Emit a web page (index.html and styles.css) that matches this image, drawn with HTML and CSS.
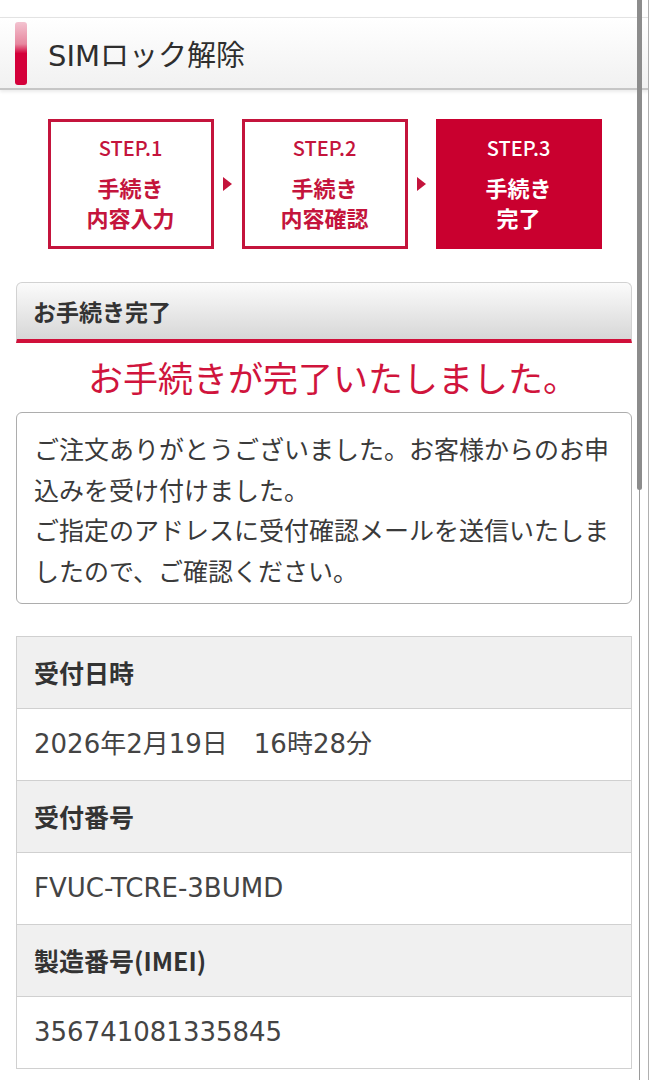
FILE: index.html
```html
<!DOCTYPE html>
<html lang="ja">
<head>
<meta charset="UTF-8" />
<meta name="viewport" content="width=device-width, initial-scale=1" />
<title>SIMロック解除</title>
<link rel="stylesheet" href="styles.css">
</head>
<body>

<div class="page">
  <div class="pagehead">
    <span class="accent"></span>
    <h1>SIMロック解除</h1>
  </div>

  <div class="steps">
    <div class="step">
      <div class="stepno">STEP.1</div>
      <div class="steplabel">手続き<br>内容入力</div>
    </div>
    <div class="arrow"><span></span></div>
    <div class="step">
      <div class="stepno">STEP.2</div>
      <div class="steplabel">手続き<br>内容確認</div>
    </div>
    <div class="arrow"><span></span></div>
    <div class="step current">
      <div class="stepno">STEP.3</div>
      <div class="steplabel">手続き<br>完了</div>
    </div>
  </div>

  <div class="content">
    <h2 class="secttitle">お手続き完了</h2>
    <p class="done">お手続きが完了いたしました。</p>

    <div class="notice">
      ご注文ありがとうございました。お客様からのお申<br>込みを受け付けました。<br>
      ご指定のアドレスに受付確認メールを送信いたしま<br>したので、ご確認ください。
    </div>

    <dl class="info">
      <dt>受付日時</dt>
      <dd>2026年2月19日　16時28分</dd>
      <dt>受付番号</dt>
      <dd>FVUC-TCRE-3BUMD</dd>
      <dt>製造番号(IMEI)</dt>
      <dd>356741081335845</dd>
    </dl>
  </div>
</div>

<!-- mobile overlay scrollbar -->
<div class="scrollrail"><div class="thumb"></div></div>

</body>
</html>
```

FILE: styles.css
```css
body {
  margin: 0;
  background: #fff;
  color: #333;
  font-family: "Noto Sans CJK JP", "Noto Sans", sans-serif;
}
.page { width: 649px; padding-top: 17px; }

.pagehead {
  height: 70px; display: flex; align-items: center; padding-left: 15px;
  border-top: 1px solid #e3e3e3; border-bottom: 2px solid #c6c6c6;
  background: linear-gradient(#fff, #f1f1f1);
  box-shadow: 0 2px 3px rgba(0,0,0,0.08);
}
.accent {
  width: 12px; height: 63px; border-radius: 3px;
  background: linear-gradient(#f3c3d0 0%, #e7879f 35%, #d4003a 50%, #d4003a 100%);
}
.pagehead h1 {
  margin: 0 0 0 21px; font-size: 29px; font-weight: 400; color: #2e2e2e;
  font-family: "DejaVu Sans", "Noto Sans CJK JP", sans-serif;
}

.steps { display: flex; justify-content: center; margin-top: 29px; }
.step {
  width: 166px; height: 130px; box-sizing: border-box;
  border: 3px solid #c4143c; color: #c4143c;
  display: flex; flex-direction: column; align-items: center; justify-content: center;
  text-align: center;
}
.step.current { background: #c9002f; border-color: #c9002f; color: #fff; }
.stepno { font-size: 20px; font-weight: 500; line-height: 28px; margin: -2px 0 10px; }
.steplabel { font-size: 22px; font-weight: 700; line-height: 30px; }
.arrow { width: 28px; display: flex; align-items: center; justify-content: center; }
.arrow span {
  width: 0; height: 0;
  border-left: 9px solid #c4143c; border-top: 7px solid transparent; border-bottom: 7px solid transparent;
}

.content { padding: 0 17px 0 16px; margin-top: 33px; }
.secttitle {
  margin: 0; height: 56px; line-height: 56px; padding-left: 16px;
  font-size: 23px; font-weight: 700; color: #333;
  border: 1px solid #d2d2d2; border-bottom: 4px solid #d0103a; border-radius: 6px 6px 0 0;
  background: linear-gradient(#fbfbfb, #d7d7d7);
}
.done {
  margin: 0; height: 69px; line-height: 68px; padding-left: 18px; text-align: center;
  font-size: 35px; color: #d0143c;
}
.notice {
  border: 1px solid #adadad; border-radius: 6px;
  padding: 15px 10px 13px 17px;
  font-size: 25px; line-height: 40.5px; color: #3a3a3a;
  white-space: nowrap;
}

.info { margin: 32px 0 0; border: 1px solid #d0d0d0; border-bottom: none; }
.info dt, .info dd {
  margin: 0; height: 71px; line-height: 71px; padding-left: 17px;
  border-bottom: 1px solid #d0d0d0; font-size: 25px;
}
.info dt { background: #f0f0f0; font-weight: 700; color: #333; }
.info dd {
  background: #fff; color: #444; font-size: 26px;
  font-family: "DejaVu Sans", "Noto Sans CJK JP", sans-serif;
}

.scrollrail {
  position: fixed; top: 0; right: 0; width: 10px; height: 100%;
  border-left: 1px solid #9a9a9a; border-right: 1px solid #b0b0b0; box-sizing: border-box;
}
.thumb { width: 5px; height: 490px; margin-left: -3px; background: #8c8c8c; border-radius: 0 0 3px 3px; }
```
